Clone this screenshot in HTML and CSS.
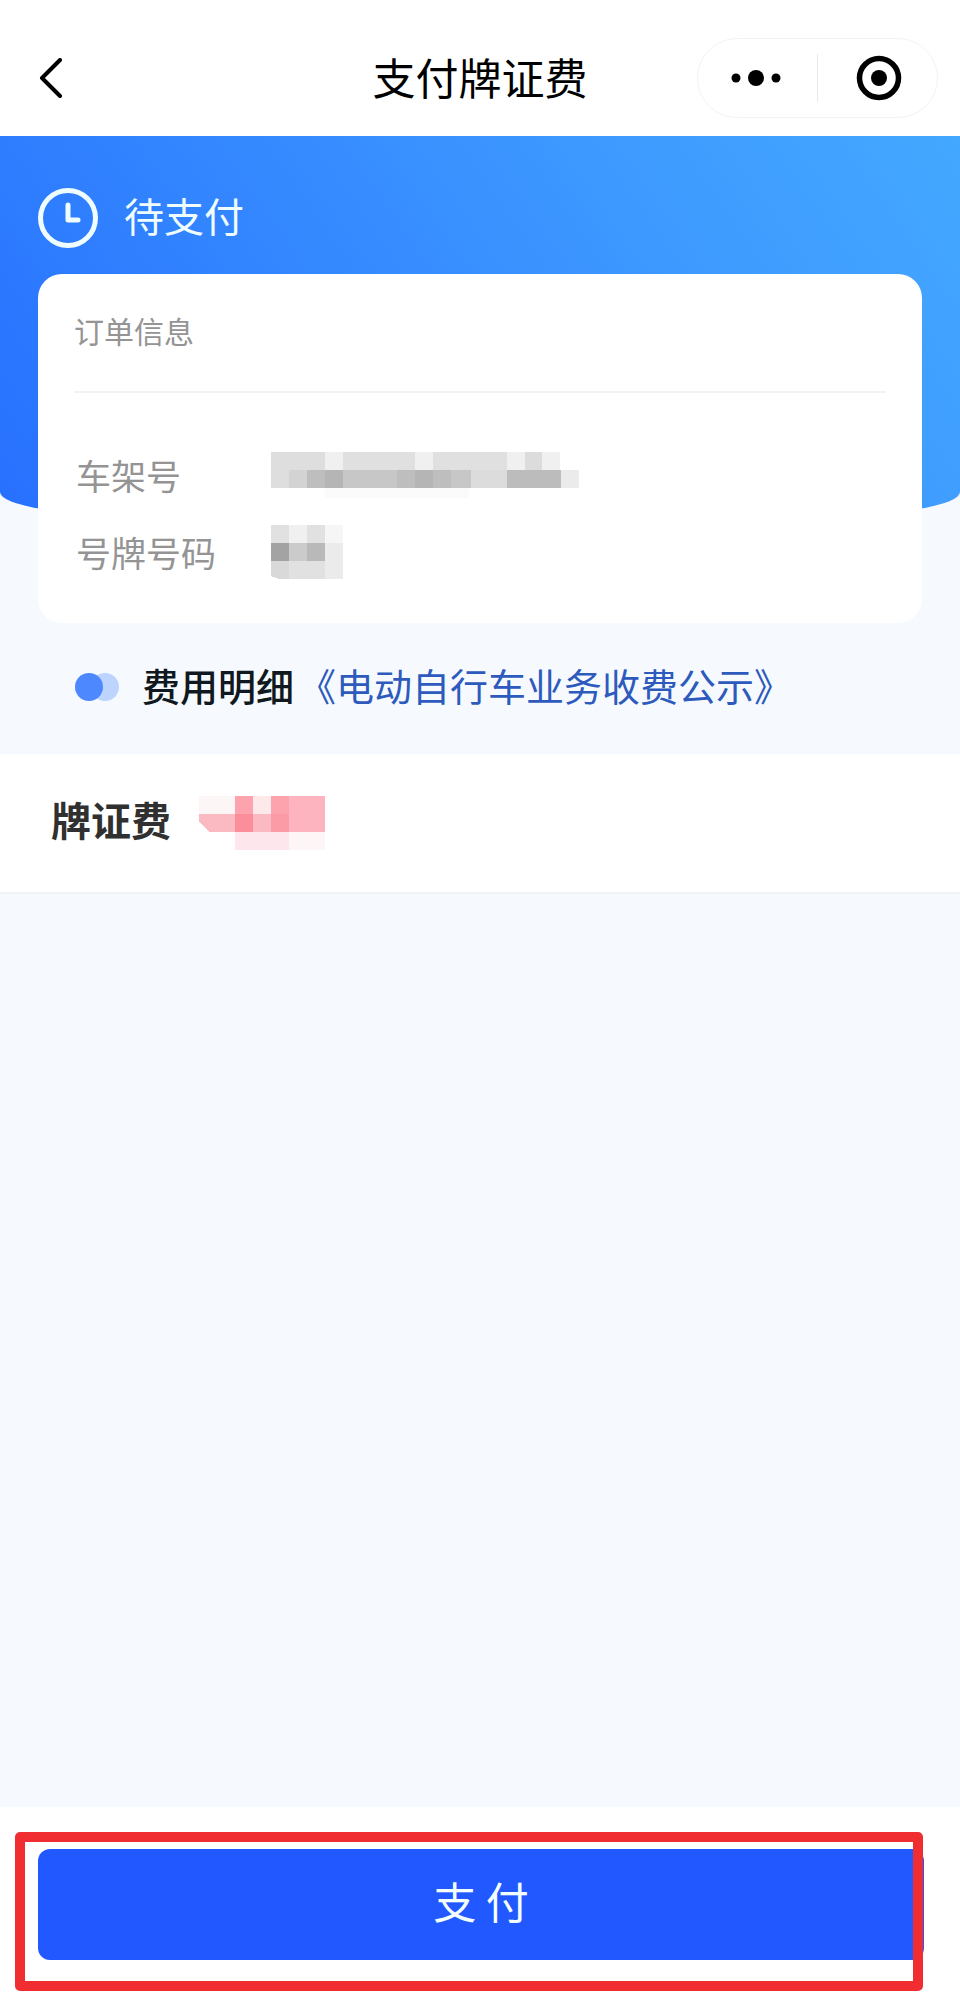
FILE: index.html
```html
<!DOCTYPE html>
<html lang="zh-CN">
<head>
<meta charset="utf-8">
<meta name="viewport" content="width=device-width, initial-scale=1">
<title>支付牌证费</title>
<link rel="stylesheet" href="styles.css">
</head>
<body>
<div class="page">
  <header class="navbar">
    <button class="back" type="button" aria-label="返回">
      <svg width="24" height="40" viewBox="0 0 24 40" fill="none" stroke="#000" stroke-width="4" stroke-linecap="round" stroke-linejoin="round"><path d="M22 2 4 20l18 18"/></svg>
    </button>
    <h1 class="title">支付牌证费</h1>
    <div class="capsule">
      <button class="capsule-btn" type="button" aria-label="更多">
        <svg width="50" height="18" viewBox="0 0 50 18"><circle cx="5" cy="9" r="4.5"/><circle cx="25" cy="9" r="8"/><circle cx="45" cy="9" r="4.5"/></svg>
      </button>
      <button class="capsule-btn" type="button" aria-label="关闭">
        <svg width="46" height="46" viewBox="0 0 46 46"><circle cx="23" cy="23" r="19.500" fill="none" stroke="#000" stroke-width="5.500"/><circle cx="23" cy="23" r="8"/></svg>
      </button>
    </div>
  </header>

  <main class="content">
    <section class="hero">
      <svg width="60" height="60" viewBox="0 0 60 60" fill="none" stroke="#f0fdff" stroke-width="5" stroke-linecap="round" stroke-linejoin="round"><circle cx="30" cy="30" r="27.500"/><path d="M30 17v15h10"/></svg>
      <h2 class="status">待支付</h2>
    </section>

    <section class="card">
      <h3 class="card-title">订单信息</h3>
      <dl class="fields">
        <dt>车架号</dt>
        <dd>
          <svg class="mosaic" width="308" height="46" viewBox="0 0 308 46" shape-rendering="crispEdges" role="img" aria-label="已隐藏">
            <path fill="#dedede" d="M0 0h54v18H18v18H0z"/>
            <path fill="#f0f0f0" d="M54 0h18v18H54zM144 0h18v18h-18zM236 0h18v18h-18zM271 0h18v18h-18z"/>
            <path fill="#e0e0e0" d="M72 0h72v18H72zM162 0h74v18h-74z"/>
            <path fill="#dcdcdc" d="M254 0h17v18h-17zM200 18h36v18h-36z"/>
            <path fill="#d3d3d3" d="M18 18h18v18H18z"/>
            <path fill="#bebebe" d="M36 18h18v18H36zM126 18h18v18h-18zM162 18h18v18h-18z"/>
            <path fill="#b5b5b5" d="M54 18h18v18H54zM144 18h18v18h-18z"/>
            <path fill="#c7c7c7" d="M72 18h54v18H72zM180 18h20v18h-20z"/>
            <path fill="#bcbcbc" d="M236 18h54v18h-54z"/>
            <path fill="#ebebeb" d="M290 18h18v18h-18z"/>
            <path fill="#fbfbfb" d="M54 36h144v10H54z"/>
          </svg>
        </dd>
        <dt>号牌号码</dt>
        <dd>
          <svg class="mosaic" width="72" height="54" viewBox="0 0 72 54" shape-rendering="crispEdges" role="img" aria-label="已隐藏">
            <path fill="#e1e1e1" d="M0 0h18v18H0zM36 0h18v18H36zM18 36h36v18H18z"/>
            <path fill="#f0f0f0" d="M18 0h18v18H18z"/>
            <path fill="#f6f6f6" d="M54 0h18v18H54z"/>
            <path fill="#a3a3a3" d="M0 18h18v18H0z"/>
            <path fill="#cbcbcb" d="M18 18h18v18H18z"/>
            <path fill="#b9b9b9" d="M36 18h18v18H36z"/>
            <path fill="#ebebeb" d="M54 18h18v36H54z"/>
            <path fill="#d9d9d9" d="M0 36h18v18H8l-8-3z"/>
          </svg>
        </dd>
      </dl>
    </section>

    <section class="detail">
      <svg width="44" height="28" viewBox="0 0 44 28"><circle cx="30" cy="14" r="14" fill="#bdd4ff"/><circle cx="14" cy="14" r="14" fill="#4d88ff"/></svg>
      <h3 class="detail-title">费用明细</h3>
      <a class="detail-link" href="#notice">《电动自行车业务收费公示》</a>
    </section>

    <section class="fee">
      <h3 class="fee-name">牌证费</h3>
      <svg class="mosaic" width="126" height="54" viewBox="0 0 126 54" shape-rendering="crispEdges" role="img" aria-label="已隐藏">
        <path fill="#fdf6f6" d="M0 0h36v18H0z"/>
        <path fill="#fde9ea" d="M54 0h18v18H54z"/>
        <path fill="#fda3ad" d="M36 0h18v18H36zM72 0h18v18H72z"/>
        <path fill="#fdb4bf" d="M90 0h36v36H90z"/>
        <path fill="#fbbac2" d="M0 18h36v18H10L0 26zM54 18h18v18H54z"/>
        <path fill="#fb8e9a" d="M36 18h18v18H36z"/>
        <path fill="#fa9ba6" d="M72 18h18v18H72z"/>
        <path fill="#fde7ec" d="M36 36h54v18H36z"/>
        <path fill="#fef6f6" d="M90 36h36v18H90z"/>
      </svg>
    </section>
  </main>

  <footer class="footer">
    <div class="pay-wrap">
      <button class="pay" type="button">支 付</button>
    </div>
  </footer>
</div>
</body>
</html>
```
FILE: styles.css
```css
* {
  box-sizing: border-box;
}

body,
h1,
h2,
h3,
dl,
dd {
  margin: 0;
}

body,
button {
  font-family: "Noto Sans CJK SC", "Noto Sans", sans-serif;
}

button {
  border: 0;
  padding: 0;
  background: none;
  color: inherit;
  cursor: pointer;
}

svg {
  display: block;
  flex: none;
}

.page {
  display: flex;
  flex-direction: column;
  min-height: 100vh;
  background: #f6faff;
}

.navbar {
  display: grid;
  grid-template-columns: 1fr auto 1fr;
  align-items: center;
  padding: 38px 22px 18px;
  background: #fff;
}

.back {
  justify-self: start;
  padding-left: 16px;
}

.title {
  padding-bottom: 4px;
  color: #000;
  font-size: 43px;
  font-weight: 400;
  line-height: 60px;
}

.capsule {
  display: flex;
  justify-self: end;
  width: 241px;
  height: 80px;
  border: 1px solid #f3f3f3;
  border-radius: 40px;
}

.capsule-btn {
  display: flex;
  flex: 1;
  align-items: center;
  justify-content: center;
  padding-right: 2px;
}

.capsule-btn + .capsule-btn {
  padding: 0 0 0 4px;
  background: linear-gradient(#e8e8e8, #e8e8e8) left center / 1px 48px no-repeat;
}

.hero {
  display: flex;
  align-items: center;
  gap: 26px;
  padding: 52px 38px 268px;
  border-radius: 0 0 140px 140px / 0 0 24px 24px;
  background: linear-gradient(55deg, #2770ff 0%, #368bff 45%, #3f9cff 75%, #43a8ff 100%);
}

.status {
  padding-bottom: 6px;
  color: #f0fdff;
  font-size: 40px;
  font-weight: 400;
  line-height: 54px;
}

.card {
  margin: -242px 38px 0;
  padding: 32px 36px 44px;
  border-radius: 24px;
  background: #fff;
}

.card-title {
  padding-bottom: 37px;
  border-bottom: 2px solid #f3f3f3;
  color: #949494;
  font-size: 30px;
  font-weight: 400;
  line-height: 48px;
}

.fields {
  display: grid;
  grid-template-columns: 197px 1fr;
  grid-auto-rows: 54px;
  align-items: center;
  row-gap: 23px;
  padding-top: 55px;
  color: #949494;
  font-size: 35px;
  line-height: 54px;
}

.fields dt {
  padding-left: 2px;
}

.detail {
  display: flex;
  align-items: center;
  padding: 36px 75px 39px;
  font-size: 38px;
  line-height: 52px;
}

.detail-title,
.detail-link {
  padding-bottom: 4px;
}

.detail-title {
  margin: 0 4px 0 23px;
  color: #101820;
  font-size: 38px;
  font-weight: 500;
}

.detail-link {
  color: #2d5abc;
  text-decoration: none;
}

.fee {
  display: flex;
  align-items: center;
  gap: 28px;
  padding: 38px 51px;
  border-bottom: 2px solid #f0f2f5;
  background: #fff;
}

.fee-name {
  padding-bottom: 8px;
  color: #303030;
  font-size: 40px;
  font-weight: 700;
  line-height: 54px;
}

.footer {
  margin-top: auto;
  padding: 42px 36px 42px 38px;
  background: #fff;
}

.pay-wrap {
  position: relative;
}

/* Highlight frame drawn over the pay button */
.pay-wrap::after {
  content: "";
  position: absolute;
  inset: -17px 1px -31px -23px;
  border: 10px solid #f02e32;
  border-radius: 5px;
  pointer-events: none;
}

.pay {
  width: 100%;
  padding: 19px 0 28px;
  border-radius: 12px;
  background: #2258ff;
  color: #f4ffff;
  font-size: 43px;
  line-height: 64px;
}
```
